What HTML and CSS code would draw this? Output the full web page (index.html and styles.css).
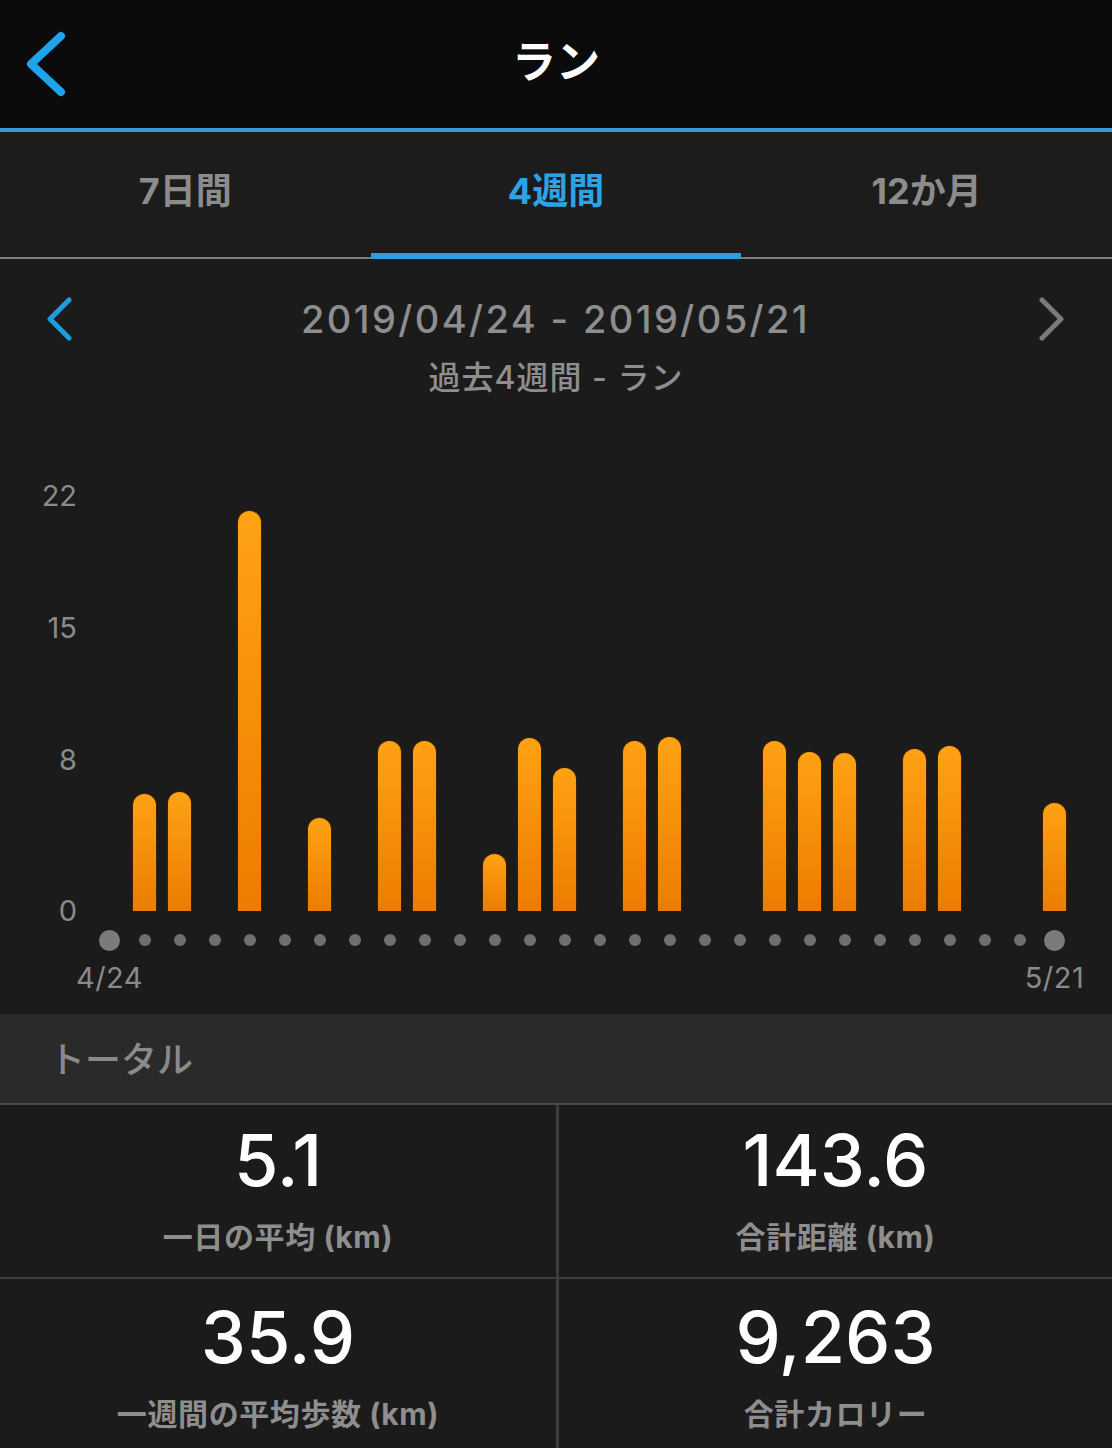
FILE: index.html
```html
<!DOCTYPE html>
<html lang="ja">
<head>
<meta charset="utf-8">
<title>ラン</title>
<link rel="stylesheet" href="styles.css">
</head>
<body>
<header class="topbar">
  <div class="topbar-left">
    <svg class="back" width="50" height="70" viewBox="0 0 50 70"><polyline points="41,7 11,35 41,63" fill="none" stroke="#1ea3ec" stroke-width="8" stroke-linecap="round" stroke-linejoin="round"/></svg>
  </div>
  <h1 class="title">ラン</h1>
  <div></div>
</header>
<div class="accent"></div>
<nav class="tabs">
  <div class="tab">7日間</div>
  <div class="tab active">4週間</div>
  <div class="tab">12か月</div>
</nav>
<section class="range">
  <div class="range-row">
    <svg class="nav-chev" width="30" height="44" viewBox="0 0 30 44"><polyline points="23,3 4,22 23,41" fill="none" stroke="#1f9be0" stroke-width="5" stroke-linecap="round" stroke-linejoin="round"/></svg>
    <div class="range-date">2019/04/24 - 2019/05/21</div>
    <svg class="nav-chev right" width="30" height="44" viewBox="0 0 30 44"><polyline points="7,3 26,22 7,41" fill="none" stroke="#7a7a7a" stroke-width="5" stroke-linecap="round" stroke-linejoin="round"/></svg>
  </div>
  <div class="range-sub">過去4週間 - ラン</div>
</section>
<section class="chart">
  <div class="chart-body">
    <div class="axis">
      <div class="tick">22</div>
      <div class="gap g7"></div>
      <div class="tick">15</div>
      <div class="gap g7"></div>
      <div class="tick">8</div>
      <div class="gap g8"></div>
      <div class="tick">0</div>
    </div>
    <div class="plot">
      <div></div>
      <div class="bar" style="height:118px"></div>
      <div class="bar" style="height:120px"></div>
      <div></div>
      <div class="bar" style="height:401px"></div>
      <div></div>
      <div class="bar" style="height:94px"></div>
      <div></div>
      <div class="bar" style="height:171px"></div>
      <div class="bar" style="height:171px"></div>
      <div></div>
      <div class="bar" style="height:58px"></div>
      <div class="bar" style="height:174px"></div>
      <div class="bar" style="height:144px"></div>
      <div></div>
      <div class="bar" style="height:171px"></div>
      <div class="bar" style="height:175px"></div>
      <div></div>
      <div></div>
      <div class="bar" style="height:171px"></div>
      <div class="bar" style="height:160px"></div>
      <div class="bar" style="height:159px"></div>
      <div></div>
      <div class="bar" style="height:163px"></div>
      <div class="bar" style="height:166px"></div>
      <div></div>
      <div></div>
      <div class="bar" style="height:109px"></div>
    </div>
  </div>
  <div class="dots">
    <span class="dot big"></span><span class="dot"></span><span class="dot"></span><span class="dot"></span>
    <span class="dot"></span><span class="dot"></span><span class="dot"></span><span class="dot"></span>
    <span class="dot"></span><span class="dot"></span><span class="dot"></span><span class="dot"></span>
    <span class="dot"></span><span class="dot"></span><span class="dot"></span><span class="dot"></span>
    <span class="dot"></span><span class="dot"></span><span class="dot"></span><span class="dot"></span>
    <span class="dot"></span><span class="dot"></span><span class="dot"></span><span class="dot"></span>
    <span class="dot"></span><span class="dot"></span><span class="dot"></span><span class="dot big"></span>
  </div>
  <div class="xlabels">
    <div class="xlabel"><span>4/24</span></div>
    <div class="xlabel"><span>5/21</span></div>
  </div>
</section>
<div class="section-head">トータル</div>
<section class="stats">
  <div class="stat">
    <div class="stat-value">5.1</div>
    <div class="stat-label">一日の平均 (km)</div>
  </div>
  <div class="stat">
    <div class="stat-value">143.6</div>
    <div class="stat-label">合計距離 (km)</div>
  </div>
  <div class="stat">
    <div class="stat-value">35.9</div>
    <div class="stat-label">一週間の平均歩数 (km)</div>
  </div>
  <div class="stat">
    <div class="stat-value">9,263</div>
    <div class="stat-label">合計カロリー</div>
  </div>
</section>
</body>
</html>
```
FILE: styles.css
```css
* { box-sizing: border-box; }
html, body {
  margin: 0;
  padding: 0;
  background: #1b1b1b;
  font-family: Inter, "Noto Sans CJK JP", sans-serif;
  color: #8e8e8e;
}
.topbar {
  height: 128px;
  background: #0b0b0b;
  display: grid;
  grid-template-columns: 1fr auto 1fr;
  align-items: center;
}
.topbar-left { display: flex; align-items: center; padding-left: 20px; }
.back { display: block; }
.title {
  margin: 0;
  color: #ffffff;
  font-size: 44px;
  font-weight: 700;
  line-height: 60px;
  padding-bottom: 4px;
}
.accent {
  height: 4px;
  background: #3a9ad8;
}
.tabs {
  display: flex;
  height: 127px;
  background: #1c1c1c;
  border-bottom: 2px solid #7d7d7d;
}
.tab {
  flex: 1 1 0;
  height: 127px;
  margin-bottom: -2px;
  border-bottom: 6px solid transparent;
  display: flex;
  align-items: center;
  justify-content: center;
  padding-bottom: 9px;
  font-size: 36px;
  font-weight: 700;
  color: #8c8c8c;
}
.tab.active {
  color: #2ea3e4;
  border-bottom-color: #2d9fe0;
}
.range { padding-top: 35px; }
.range-row {
  display: grid;
  grid-template-columns: 1fr auto 1fr;
  align-items: center;
  height: 50px;
  padding: 0 47px 0 46px;
}
.nav-chev { display: block; }
.nav-chev.right { justify-self: end; }
.range-date {
  font-size: 38px;
  font-weight: 500;
  letter-spacing: 2.4px;
  color: #8e8e8e;
  line-height: 50px;
}
.range-sub {
  margin-top: 14px;
  text-align: center;
  font-size: 32px;
  font-weight: 500;
  letter-spacing: 1px;
  line-height: 40px;
  color: #8e8e8e;
}
.chart { padding: 92px 0 20px; }
.chart-body { display: flex; }
.axis {
  width: 77px;
  margin-right: 15px;
  height: 421px;
  padding: 5px 0 1px;
  display: flex;
  flex-direction: column;
  align-items: flex-end;
}
.tick {
  height: 0;
  display: flex;
  align-items: center;
  font-size: 29px;
  color: #8a8a8a;
}
.gap { flex-basis: 0; }
.g7 { flex-grow: 7; }
.g8 { flex-grow: 8; }
.plot {
  display: grid;
  grid-template-columns: repeat(28, 35px);
  height: 421px;
  align-items: end;
  justify-items: center;
}
.bar {
  width: 25px;
  border-radius: 12.5px 12.5px 0 0;
  background: linear-gradient(#ffa214, #ec7c00);
  border: 1px solid #3a2100;
  border-bottom: none;
}
.dots {
  margin-top: 17px;
  margin-left: 92px;
  height: 24px;
  display: grid;
  grid-template-columns: repeat(28, 35px);
  align-items: center;
  justify-items: center;
}
.dot {
  width: 12px;
  height: 12px;
  border-radius: 50%;
  background: #6f6f6f;
}
.dot.big {
  width: 21px;
  height: 21px;
  background: #7b7b7b;
}
.xlabels {
  margin-top: 10px;
  margin-left: 92px;
  width: 980px;
  display: flex;
  justify-content: space-between;
  height: 32px;
}
.xlabel {
  width: 35px;
  display: flex;
  justify-content: center;
  white-space: nowrap;
  font-size: 29px;
  letter-spacing: 0.5px;
  line-height: 32px;
  color: #8a8a8a;
}
.section-head {
  height: 91px;
  background: #2a2a2a;
  border-bottom: 2px solid #474747;
  padding-left: 49px;
  padding-top: 3px;
  font-size: 36px;
  font-weight: 500;
  line-height: 86px;
  color: #8a8a8a;
}
.stats {
  display: grid;
  grid-template-columns: 556px 1fr;
  grid-auto-rows: 172px;
  gap: 2px 3px;
  background: #3c3c3c;
}
.stat {
  background: #1b1b1b;
  padding-top: 15px;
  text-align: center;
}
.stat:nth-child(n+3) { padding-top: 18px; }
.stat-value {
  color: #ffffff;
  font-size: 72px;
  font-weight: 500;
  line-height: 80px;
}
.stat-label {
  margin-top: 17px;
  font-size: 30px;
  font-weight: 700;
  letter-spacing: 0.6px;
  line-height: 40px;
  color: #8e8e8e;
}
```
